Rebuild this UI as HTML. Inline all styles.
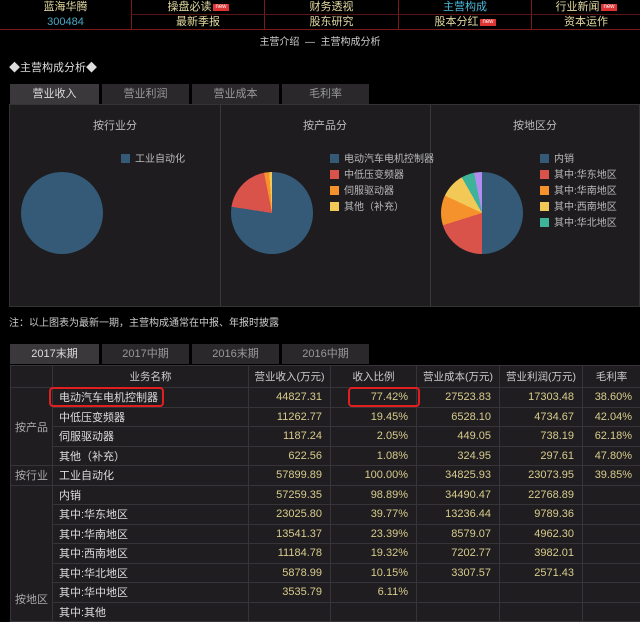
<!DOCTYPE html>
<html><head><meta charset="utf-8"><style>
*{margin:0;padding:0;box-sizing:border-box}
body{width:640px;height:603px;overflow:hidden;background:#000;font-family:"Liberation Sans","Noto Sans CJK SC",sans-serif;font-size:11px;color:#bbb;position:relative}
.abs{position:absolute}
.nav{left:0;top:0;width:640px;height:30px;border-bottom:1px solid #7a1a1a}
.nc{position:absolute;height:15px;line-height:15px;text-align:center;color:#e0d8a0;font-size:11px;border-left:1px solid #7a1a1a}
.new{display:inline-block;background:#d33;color:#fff;font-size:6px;line-height:7px;padding:0 2px;vertical-align:middle;margin-left:2px}
.tab{position:absolute;height:20px;line-height:20px;text-align:center;background:#2a282b;color:#999;font-size:11px}
.tab.on{background:#3a383b;color:#ddd}
.panel{left:9px;top:104px;width:631px;height:203px;background:#1e1c1f;border:1px solid #333}
.pt{position:absolute;top:12px;width:210px;text-align:center;color:#bbb;font-size:11px}
.pie{position:absolute;width:82px;height:82px;border-radius:50%}
.lg{position:absolute;font-size:10px;color:#bbb;line-height:16px}
.lg i{display:inline-block;width:9px;height:9px;margin-right:5px;vertical-align:-1px}
table{position:absolute;left:10px;top:365px;width:630px;border-collapse:collapse;background:#1f1d20;table-layout:fixed}
td{border:1px solid #363438;height:19.5px;font-size:11px;color:#ddd;padding:0 6px;white-space:nowrap;overflow:hidden}
td.n{text-align:right;color:#d8cc8c;padding-right:8px}
tr.h td{height:22px;color:#ccc;text-align:center;padding:0;font-size:10.5px}
td.g{color:#aaa;text-align:center;padding:0}
.box{position:absolute;border:2px solid #e02020;border-radius:4px}
</style></head><body>
<div class="abs nav">
<div class="nc" style="left:0;top:0;width:131px;border-left:none">蓝海华腾</div>
<div class="nc" style="left:0;top:15px;width:131px;border-left:none;color:#4aa8c8">300484</div>
<div class="nc" style="left:131px;top:0;width:133px">操盘必读<span class="new">new</span></div>
<div class="nc" style="left:264px;top:0;width:134px">财务透视</div>
<div class="nc" style="left:398px;top:0;width:133px;color:#4ab8d8">主营构成</div>
<div class="nc" style="left:531px;top:0;width:109px">行业新闻<span class="new">new</span></div>
<div class="nc" style="left:131px;top:15px;width:133px">最新季报</div>
<div class="nc" style="left:264px;top:15px;width:134px">股东研究</div>
<div class="nc" style="left:398px;top:15px;width:133px">股本分红<span class="new">new</span></div>
<div class="nc" style="left:531px;top:15px;width:109px">资本运作</div>
<div class="abs" style="left:131px;top:14px;width:509px;border-top:1px solid #5a1515"></div>
</div>
<div class="abs" style="left:0;top:33px;width:640px;text-align:center;color:#ccc;font-size:10px">主营介绍 &nbsp;— &nbsp;主营构成分析</div>
<div class="abs" style="left:9px;top:59px;color:#ddd;font-size:11px">◆主营构成分析◆</div>
<div class="tab on" style="left:10px;top:84px;width:89px">营业收入</div>
<div class="tab" style="left:102px;top:84px;width:87px">营业利润</div>
<div class="tab" style="left:192px;top:84px;width:87px">营业成本</div>
<div class="tab" style="left:282px;top:84px;width:87px">毛利率</div>
<div class="abs panel">
<div class="abs" style="left:210px;top:0;width:1px;height:201px;background:#3a383b"></div>
<div class="abs" style="left:420px;top:0;width:1px;height:201px;background:#3a383b"></div>
<div class="pt" style="left:0">按行业分</div>
<div class="pt" style="left:210px">按产品分</div>
<div class="pt" style="left:420px">按地区分</div>
<div class="pie" style="left:11px;top:67px;background:#345a78"></div>
<div class="pie" style="left:221px;top:67px;background:conic-gradient(#345a78 0 77.42%,#d9534b 0 96.87%,#f5922b 0 98.92%,#f2c956 0)"></div>
<div class="pie" style="left:431px;top:67px;background:conic-gradient(#345a78 0 50.04%,#d9534b 0 70.16%,#f5922b 0 81.99%,#f2c956 0 91.77%,#3fb39a 0 96.91%,#b48cf0 0)"></div>
<div class="lg" style="left:111px;top:47px"><i style="background:#345a78"></i>工业自动化</div>
<div class="lg" style="left:320px;top:47px"><i style="background:#345a78"></i>电动汽车电机控制器<br><i style="background:#d9534b"></i>中低压变频器<br><i style="background:#f5922b"></i>伺服驱动器<br><i style="background:#f2c956"></i>其他（补充）</div>
<div class="lg" style="left:530px;top:47px"><i style="background:#345a78"></i>内销<br><i style="background:#d9534b"></i>其中:华东地区<br><i style="background:#f5922b"></i>其中:华南地区<br><i style="background:#f2c956"></i>其中:西南地区<br><i style="background:#3fb39a"></i>其中:华北地区</div>
</div>
<div class="abs" style="left:9px;top:314px;color:#ccc;font-size:10px">注：以上图表为最新一期，主营构成通常在中报、年报时披露</div>
<div class="tab on" style="left:10px;top:344px;width:89px">2017末期</div>
<div class="tab" style="left:102px;top:344px;width:87px">2017中期</div>
<div class="tab" style="left:192px;top:344px;width:87px">2016末期</div>
<div class="tab" style="left:282px;top:344px;width:87px">2016中期</div>
<table>
<colgroup><col style="width:42px"><col style="width:196px"><col style="width:82px"><col style="width:86px"><col style="width:83px"><col style="width:83px"><col style="width:58px"></colgroup>
<tr class="h"><td></td><td>业务名称</td><td>营业收入(万元)</td><td>收入比例</td><td>营业成本(万元)</td><td>营业利润(万元)</td><td>毛利率</td></tr>
<tr><td class="g" rowspan="4">按产品</td><td>电动汽车电机控制器</td><td class="n">44827.31</td><td class="n">77.42%</td><td class="n">27523.83</td><td class="n">17303.48</td><td class="n">38.60%</td></tr>
<tr><td>中低压变频器</td><td class="n">11262.77</td><td class="n">19.45%</td><td class="n">6528.10</td><td class="n">4734.67</td><td class="n">42.04%</td></tr>
<tr><td>伺服驱动器</td><td class="n">1187.24</td><td class="n">2.05%</td><td class="n">449.05</td><td class="n">738.19</td><td class="n">62.18%</td></tr>
<tr><td>其他（补充）</td><td class="n">622.56</td><td class="n">1.08%</td><td class="n">324.95</td><td class="n">297.61</td><td class="n">47.80%</td></tr>
<tr><td class="g">按行业</td><td>工业自动化</td><td class="n">57899.89</td><td class="n">100.00%</td><td class="n">34825.93</td><td class="n">23073.95</td><td class="n">39.85%</td></tr>
<tr><td class="g" rowspan="7" style="vertical-align:bottom;padding-bottom:14px">按地区</td><td>内销</td><td class="n">57259.35</td><td class="n">98.89%</td><td class="n">34490.47</td><td class="n">22768.89</td><td></td></tr>
<tr><td>其中:华东地区</td><td class="n">23025.80</td><td class="n">39.77%</td><td class="n">13236.44</td><td class="n">9789.36</td><td></td></tr>
<tr><td>其中:华南地区</td><td class="n">13541.37</td><td class="n">23.39%</td><td class="n">8579.07</td><td class="n">4962.30</td><td></td></tr>
<tr><td>其中:西南地区</td><td class="n">11184.78</td><td class="n">19.32%</td><td class="n">7202.77</td><td class="n">3982.01</td><td></td></tr>
<tr><td>其中:华北地区</td><td class="n">5878.99</td><td class="n">10.15%</td><td class="n">3307.57</td><td class="n">2571.43</td><td></td></tr>
<tr><td>其中:华中地区</td><td class="n">3535.79</td><td class="n">6.11%</td><td></td><td></td><td></td></tr>
<tr><td>其中:其他</td><td class="n"></td><td class="n"></td><td></td><td></td><td></td></tr>
</table>
<div class="box" style="left:49px;top:387px;width:115px;height:20px"></div>
<div class="box" style="left:348px;top:387px;width:72px;height:20px"></div>
</body></html>
